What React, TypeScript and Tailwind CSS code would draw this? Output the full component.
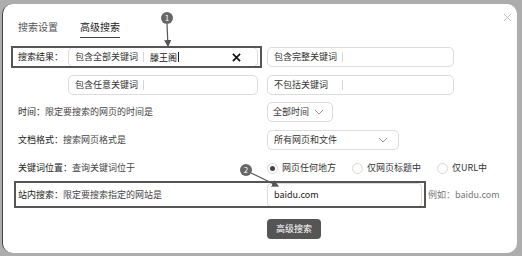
import React from "react";

const font = { fontFamily: '"Noto Sans CJK SC", "Noto Sans", sans-serif' };

function Sep() {
  return <span className="mx-[6px] inline-block h-[10px] w-px bg-[#d6d6d6]" />;
}

function KeywordInput({ label, width, value, clear }: { label: string; width: string; value?: string; clear?: boolean }) {
  return (
    <div className={`flex h-[20px] items-center rounded-[5px] border border-[#dcdcdc] bg-white pl-[6px] pr-[12px] ${width}`}>
      <span className="w-[62px] whitespace-nowrap text-[#333]">{label}</span>
      <Sep />
      {value && (
        <span className="text-[#222]">
          {value}
          <span className="ml-px inline-block h-[10px] w-px translate-y-[1px] bg-[#222]" />
        </span>
      )}
      {clear && (
        <svg className="ml-auto mr-[4px]" width="9" height="9" viewBox="0 0 10 10">
          <path d="M1 1L9 9M9 1L1 9" stroke="#111" strokeWidth="1.8" />
        </svg>
      )}
    </div>
  );
}

function Chevron() {
  return (
    <svg width="10" height="6" viewBox="0 0 10 6">
      <path d="M1 1L5 5L9 1" fill="none" stroke="#999" strokeWidth="1" />
    </svg>
  );
}

function Radio({ label, checked }: { label: string; checked?: boolean }) {
  return (
    <div className="flex items-center">
      <span className="flex h-[11px] w-[11px] items-center justify-center rounded-full border border-[#d8d8d8] bg-white">
        {checked && <span className="h-[5px] w-[5px] rounded-full bg-[#444]" />}
      </span>
      <span className="ml-[4px] whitespace-nowrap text-[#333]">{label}</span>
    </div>
  );
}

export default function App() {
  return (
    <div className="h-[256px] w-[522px] overflow-hidden bg-[#adadad] pb-[3px] pl-[2px] pr-[5px] pt-[4px]" style={font}>
      <div className="relative h-full w-full rounded-[10px] border-l border-[#444] bg-white pl-[15px] pt-[17px] text-[9px] leading-[12px] text-[#333]">
        {/* close */}
        <svg className="absolute right-[5px] top-[9px]" width="9" height="9" viewBox="0 0 10 10">
          <path d="M1 1L9 9M9 1L1 9" stroke="#bbb" strokeWidth="1" />
        </svg>

        {/* tabs */}
        <div className="flex gap-[22px] text-[10px]">
          <span className="pb-[4px] text-[#555]">搜索设置</span>
          <span className="border-b-[1.5px] border-[#444] pb-[4px] text-[#222]">高级搜索</span>
        </div>

        {/* keyword rows */}
        <div className="mt-[9px] flex items-center">
          <span className="w-[50px] text-[#222]">搜索结果：</span>
          <KeywordInput label="包含全部关键词" value="滕王阁" clear width="w-[190px]" />
          <div className="ml-[9px]">
            <KeywordInput label="包含完整关键词" width="w-[187px]" />
          </div>
        </div>
        <div className="mt-[8px] flex items-center">
          <span className="w-[50px]" />
          <KeywordInput label="包含任意关键词" width="w-[190px]" />
          <div className="ml-[9px]">
            <KeywordInput label="不包括关键词" width="w-[187px]" />
          </div>
        </div>

        {/* time */}
        <div className="mt-[7px] flex h-[20px] items-center">
          <span className="w-[249px]">
            <span className="text-[#222]">时间：</span>
            <span className="text-[#444]">限定要搜索的网页的时间是</span>
          </span>
          <div className="flex h-[20px] w-[66px] items-center justify-between whitespace-nowrap rounded-[5px] border border-[#dcdcdc] pl-[5px] pr-[8px]">
            <span>全部时间</span>
            <Chevron />
          </div>
        </div>

        {/* format */}
        <div className="mt-[8px] flex h-[20px] items-center">
          <span className="w-[249px]">
            <span className="text-[#222]">文档格式：</span>
            <span className="text-[#444]">搜索网页格式是</span>
          </span>
          <div className="flex h-[20px] w-[132px] items-center justify-between whitespace-nowrap rounded-[5px] border border-[#dcdcdc] pl-[6px] pr-[10px]">
            <span>所有网页和文件</span>
            <Chevron />
          </div>
        </div>

        {/* position */}
        <div className="mt-[8px] flex h-[20px] items-center">
          <span className="w-[249px]">
            <span className="text-[#222]">关键词位置：</span>
            <span className="text-[#444]">查询关键词位于</span>
          </span>
          <div className="flex items-center gap-[16px]">
            <Radio label="网页任何地方" checked />
            <Radio label="仅网页标题中" />
            <Radio label="仅URL中" />
          </div>
        </div>

        {/* site */}
        <div className="mt-[5px] flex h-[24px] items-center">
          <span className="w-[249px]">
            <span className="text-[#222]">站内搜索：</span>
            <span className="text-[#444]">限定要搜索指定的网站是</span>
          </span>
          <div className="flex h-[24px] w-[155px] items-center rounded-[4px] border border-[#dcdcdc] pl-[6px] text-[#222]">
            baidu.com
          </div>
          <span className="ml-[6px] text-[#777]">例如：baidu.com</span>
        </div>

        {/* submit */}
        <div className="mt-[12px] flex">
          <span className="w-[249px]" />
          <button className="h-[20px] w-[54px] rounded-[4px] bg-[#555] text-[9px] text-white">高级搜索</button>
        </div>

        {/* annotations */}
        <div className="pointer-events-none absolute left-[8px] top-[42px] h-[22px] w-[251px] border-2 border-[#555]" />
        <div className="pointer-events-none absolute left-[11px] top-[177px] h-[27px] w-[412px] border-2 border-[#555]" />
        <svg className="pointer-events-none absolute left-0 top-0" width="515" height="249">
          <defs>
            <marker id="ah" markerWidth="6" markerHeight="6" refX="5" refY="3" orient="auto">
              <path d="M0 0L6 3L0 6Z" fill="#555" />
            </marker>
          </defs>
          <line x1="164" y1="20" x2="165" y2="42" stroke="#555" strokeWidth="1.2" markerEnd="url(#ah)" />
          <line x1="248" y1="169" x2="275" y2="182" stroke="#555" strokeWidth="1.2" markerEnd="url(#ah)" />
        </svg>
        <span className="absolute left-[158px] top-[8px] flex h-[12px] w-[12px] items-center justify-center rounded-full bg-[#666] text-[8px] leading-none text-white">1</span>
        <span className="absolute left-[237px] top-[160px] flex h-[12px] w-[12px] items-center justify-center rounded-full bg-[#666] text-[8px] leading-none text-white">2</span>
      </div>
    </div>
  );
}
